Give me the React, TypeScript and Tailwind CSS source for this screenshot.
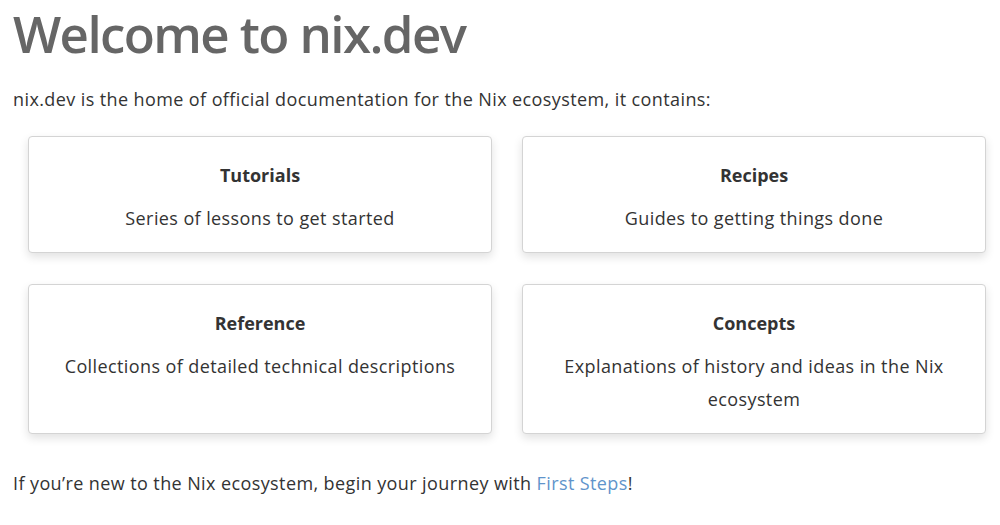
import React from "react";

const cards = [
  { title: "Tutorials", desc: "Series of lessons to get started" },
  { title: "Recipes", desc: "Guides to getting things done" },
  { title: "Reference", desc: "Collections of detailed technical descriptions" },
  { title: "Concepts", desc: "Explanations of history and ideas in the Nix ecosystem" },
];

export default function App() {
  return (
    <div className="min-h-[525px] bg-white px-[13px] text-[#333] font-['Open_Sans',sans-serif] text-[18px] leading-[32px] tracking-[0.4px]">
      <h1 className="text-[51px] leading-[66px] font-semibold tracking-[-1.6px] text-[#666]">Welcome to nix.dev</h1>
      <p className="mt-[17px]">
        nix.dev is the home of official documentation for the Nix ecosystem, it contains:
      </p>
      <div className="mt-[21px] ml-[15px] grid grid-cols-[464px_464px] gap-x-[30px] gap-y-[31px]">
        {cards.map((c) => (
          <div
            key={c.title}
            className="rounded-[4px] border border-[#d4d4d4] bg-white px-[20px] pt-[22px] pb-[17px] text-center shadow-[0_4px_10px_rgba(0,0,0,0.12)]"
          >
            <div className="font-bold tracking-normal">{c.title}</div>
            <div className="mt-[11px] leading-[33px]">{c.desc}</div>
          </div>
        ))}
      </div>
      <p className="mt-[33px]">
        If you’re new to the Nix ecosystem, begin your journey with{" "}
        <a className="text-[#5f94cb]" href="#">First Steps</a>!
      </p>
    </div>
  );
}
